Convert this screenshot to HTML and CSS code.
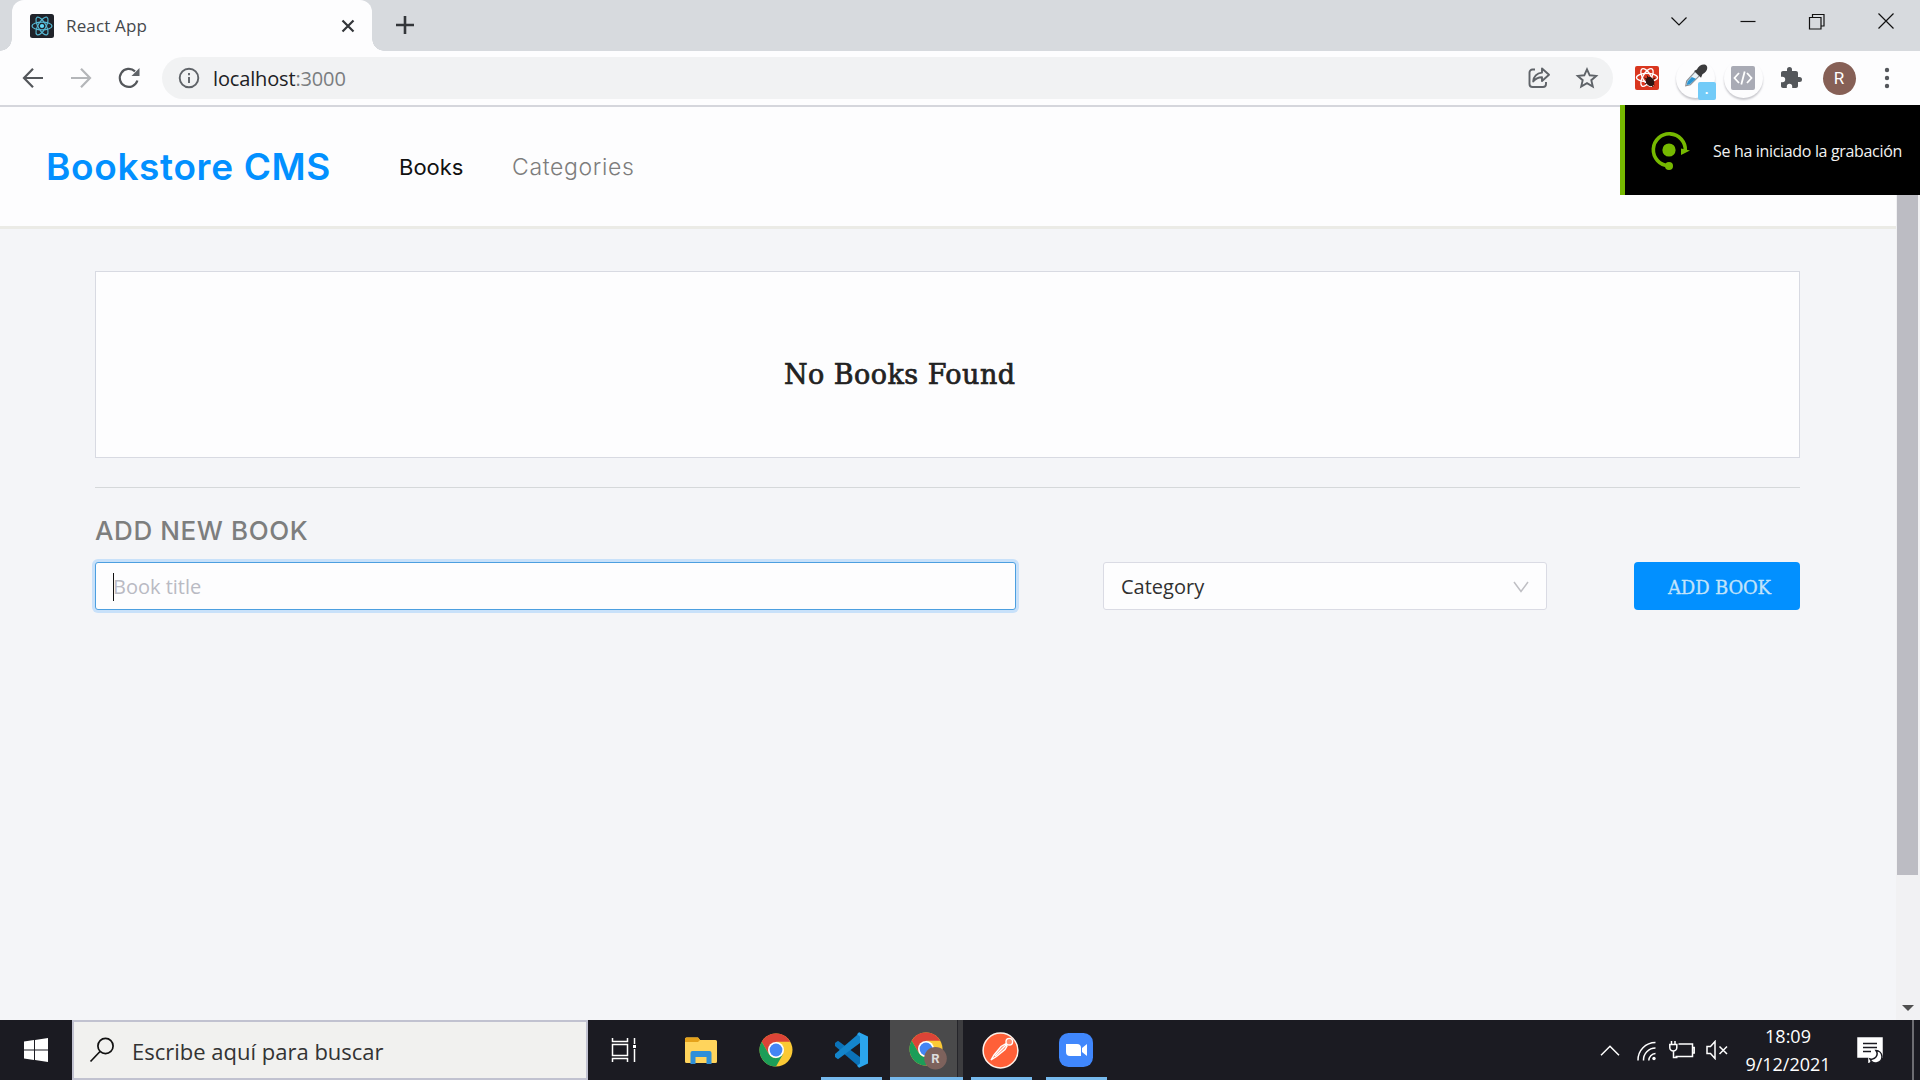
FILE: index.html
```html
<!DOCTYPE html>
<html lang="es">
<head>
<meta charset="utf-8">
<title>React App</title>
<link rel="stylesheet" href="styles.css">
</head>
<body>
<div class="screen">
  <div class="tabstrip">
    <div class="tab">
      <svg class="favicon" viewBox="0 0 24 24"><rect width="24" height="24" rx="2.5" fill="#20232a"/><g fill="none" stroke="#56b9d4" stroke-width="1.2"><ellipse cx="12" cy="12" rx="10" ry="3.9"/><ellipse cx="12" cy="12" rx="10" ry="3.9" transform="rotate(60 12 12)"/><ellipse cx="12" cy="12" rx="10" ry="3.9" transform="rotate(120 12 12)"/></g><circle cx="12" cy="12" r="2.1" fill="#61dafb"/></svg>
      <span class="tab-title">React App</span>
      <svg class="tab-close" viewBox="0 0 14 14"><path d="M1.5 1.5l11 11M12.5 1.5l-11 11" stroke="#33363a" stroke-width="2.2"/></svg>
    </div>
    <svg class="new-tab" viewBox="0 0 18 18"><path d="M9 0v18M0 9h18" stroke="#33363a" stroke-width="2.6"/></svg>
    <div class="window-controls">
      <svg viewBox="0 0 18 18"><path d="M1.5 5.5L9 13l7.500-7.500" /></svg>
      <svg viewBox="0 0 18 18"><path d="M1.500 9.500h15"/></svg>
      <svg viewBox="0 0 18 18"><path d="M1.500 5.500h11.500V17H1.500zM4.500 5.500V2.500h11.500V14h-3"/></svg>
      <svg viewBox="0 0 18 18"><path d="M1.500 1.500l15 15M16.500 1.500l-15 15"/></svg>
    </div>
  </div>

  <div class="toolbar">
    <svg class="tool" viewBox="0 0 24 24"><path d="M22 12H3.500M12 2.800L3 12l9 9.200"/></svg>
    <svg class="tool faded" viewBox="0 0 24 24"><path d="M2 12h18.500M12 2.800L21 12l-9 9.200"/></svg>
    <svg class="tool reload" viewBox="0 0 24 24"><path d="M20.400 14.500A9 9 0 1 1 18 5.400"/><path d="M22.500 2v8h-8z" fill="#5f6368" stroke="none"/></svg>
    <div class="omnibox">
      <svg class="info" viewBox="0 0 24 24"><circle cx="12" cy="12" r="9.300"/><path d="M12 11v6M12 7v2.200"/></svg>
      <span class="url">localhost<span class="port">:3000</span></span>
      <svg class="share" viewBox="0 0 24 24"><path d="M8 3.500H5.500a3 3 0 0 0-3 3V18a3 3 0 0 0 3 3H16a3 3 0 0 0 3-3v-2"/><path d="M15 2.500l7 6.300-7 6.200v-3.800c-4 0-6.500 1.200-8.800 4.200.5-5 3.300-8.200 8.800-8.800z" stroke-linejoin="round"/></svg>
      <svg class="star" viewBox="0 0 24 24"><path d="M12 3.300l2.700 6 6.500.6-4.900 4.300 1.500 6.400-5.800-3.400-5.800 3.400 1.500-6.400-4.900-4.300 6.500-.6z"/></svg>
    </div>
    <div class="extensions">
      <svg class="ext" viewBox="0 0 24 24"><rect width="24" height="24" rx="2" fill="#d9361f"/><g fill="none" stroke="#fff" stroke-width="1.300"><ellipse cx="12" cy="11.500" rx="10.500" ry="4.200"/><ellipse cx="12" cy="11.500" rx="10" ry="4.200" transform="rotate(60 12 11.500)"/><ellipse cx="12" cy="11.500" rx="10" ry="4.200" transform="rotate(120 12 11.500)"/></g><ellipse cx="15" cy="15.500" rx="4" ry="5" transform="rotate(-35 15 15.500)" fill="#2b1512"/><path d="M9.500 12l10 7M10 18l10-6M12 9.500l6 11.500" stroke="#2b1512"/></svg>
      <span class="halo"><svg class="pipette" viewBox="0 0 28 28"><path d="M4 24.500l1-5L14.500 9l4.500 4.500L9 23.500z" fill="#e8f1f6" stroke="#8b8f94" stroke-width="1.200"/><path d="M5 23.800l1-4L10.500 15l4.500 2-6.500 6z" fill="#2d95d2"/><path d="M13 8.500l3-1.500c2-5 8.500-7 10.500-4s-.5 7.500-4.500 9l-1.500 4z" fill="#3b3b3d"/></svg><span class="badge"><span class="badge-dot">.</span></span></span>
      <span class="halo"><svg class="code" viewBox="0 0 24 24"><rect width="24" height="24" rx="2" fill="#a9abb5"/><path d="M8 7l-4.500 5L8 17M16 7l4.500 5-4.500 5M13.700 5.500l-3.400 13" fill="none" stroke="#fff" stroke-width="1.800"/></svg></span>
      <svg class="ext" viewBox="0 0 24 24"><path d="M20.500 11H19V7c0-1.100-.9-2-2-2h-4V3.500a2.500 2.500 0 0 0-5 0V5H4c-1.100 0-2 .9-2 2v3.800h1.500a2.700 2.700 0 0 1 0 5.400H2V20c0 1.100.9 2 2 2h3.800v-1.500a2.700 2.700 0 0 1 5.400 0V22H17c1.100 0 2-.9 2-2v-4h1.500a2.500 2.500 0 0 0 0-5z" fill="#54575b"/></svg>
      <span class="avatar">R</span>
      <svg class="ext" viewBox="0 0 24 24" fill="#54575b"><circle cx="12" cy="4" r="2.200"/><circle cx="12" cy="12" r="2.200"/><circle cx="12" cy="20" r="2.200"/></svg>
    </div>
  </div>

  <div class="viewport">
    <div class="page">
      <header class="header">
        <h1 class="brand">Bookstore CMS</h1>
        <nav class="nav"><a class="nav-books">Books</a><a class="nav-categories">Categories</a></nav>
      </header>
      <main class="content">
        <section class="empty"><h2 class="empty-text">No Books Found</h2></section>
        <hr class="divider">
        <h3 class="form-title">ADD NEW BOOK</h3>
        <form class="form">
          <div class="field title-field"><span class="caret"></span><span class="placeholder">Book title</span></div>
          <div class="field category"><span class="category-text">Category</span><svg class="chevron" viewBox="0 0 16 12"><path d="M1 1l7 9.500L15 1" fill="none" stroke="#bfbfc4" stroke-width="1.500"/></svg></div>
          <div class="add"><span>ADD BOOK</span></div>
        </form>
      </main>
    </div>
    <div class="scrollbar"><div class="thumb"></div><svg class="down" viewBox="0 0 12 6"><path d="M0 0h12L6 6z" fill="#505050"/></svg></div>
  </div>

  <div class="taskbar">
    <div class="start"><svg viewBox="0 0 24 24"><path d="M0 3.500l10-1.400v9.400H0zM11 1.900L24 0v11.500H11zM0 12.500h10v9.400l-10-1.400zM11 12.500h13V24l-13-1.900z" fill="#fff"/></svg></div>
    <div class="search">
      <svg viewBox="0 0 26 26"><circle cx="16.500" cy="9" r="7.600" fill="none" stroke="#111" stroke-width="1.700"/><path d="M11 14.500L1.500 24.500" stroke="#111" stroke-width="1.700"/></svg>
      <span class="search-text">Escribe aquí para buscar</span>
    </div>
    <div class="apps">
      <div class="app taskview"><svg width="26" height="24" viewBox="0 0 26 24" fill="none" stroke="#fff" stroke-width="1.500"><path d="M1.500 0v3.500h15V0M1.500 24v-3.500h15V24M1.500 6.500h15v11h-15zM23.500 0v6M23.500 11v13"/><path d="M22 7h3v3h-3z" fill="#fff" stroke="none"/></svg></div>
      <div class="app explorer"><svg width="32" height="27" viewBox="0 0 32 27"><path d="M0 2a1.500 1.500 0 0 1 1.500-1.500H13L15 3h15.500A1.500 1.500 0 0 1 32 4.500v20a1.500 1.500 0 0 1-1.500 1.500h-29A1.500 1.500 0 0 1 0 24.500z" fill="#ffd45c"/><path d="M0 5V2A1.500 1.500 0 0 1 1.500.5H13L15 3l-2 2z" fill="#e5a21b"/><path d="M5.500 27V16a2 2 0 0 1 2-2h17a2 2 0 0 1 2 2v11h-5v-7h-11v7z" fill="#2e8fd8"/></svg></div>
      <div class="app chrome"><svg width="34" height="34" viewBox="0 0 34 34"><circle cx="17" cy="17" r="16.500" fill="#fbc935"/><path d="M2.710 8.750A16.500 16.500 0 0 1 31.290 8.750L17 8.750L9.850 21.100z" fill="#dc4437"/><path d="M2.710 8.750L9.850 21.100A8.250 8.250 0 0 0 17 25.200L24.100 21.100 17 33.500A16.500 16.500 0 0 1 2.710 8.750z" fill="#1c9d58"/><circle cx="17" cy="17" r="8" fill="#fff"/><circle cx="17" cy="17" r="6.400" fill="#4485f4"/></svg></div>
      <div class="app open vscode"><svg width="36" height="36" viewBox="0 0 36 36"><path d="M2 11l3-2.300L27 25v10.500L2 14z" fill="#0b72b8"/><path d="M2 25l3 2.300L27 11V.5L2 22z" fill="#1485cb"/><path d="M26 .2l9 4.300v27L26 35.800l-2-2 3-2.300V4.500L24 2.200z" fill="#2ba5ec"/></svg></div>
      <div class="app open active"><svg width="40" height="38" viewBox="0 0 40 38"><circle cx="17" cy="17" r="16.500" fill="#fbc935"/><path d="M2.710 8.750A16.500 16.500 0 0 1 31.290 8.750L17 8.750L9.850 21.100z" fill="#dc4437"/><path d="M2.710 8.750L9.850 21.100A8.250 8.250 0 0 0 17 25.200L24.100 21.100 17 33.500A16.500 16.500 0 0 1 2.710 8.750z" fill="#1c9d58"/><circle cx="17" cy="17" r="8" fill="#fff"/><circle cx="17" cy="17" r="6.400" fill="#4485f4"/><circle cx="26.500" cy="26.200" r="11.300" fill="#7d625c"/><text x="26.500" y="31" text-anchor="middle" class="mini-r">R</text></svg></div>
      <div class="app open postman"><svg width="37" height="37" viewBox="0 0 37 37"><circle cx="18.500" cy="18.500" r="17.400" fill="#ff6038" stroke="#fff1e8" stroke-width="1.500"/><path d="M9 28l3-5 7-8.500 4.500-2.500 1.500 2-2 3.500-8.500 7z" fill="#ff8c6d" stroke="#fff" stroke-width="1.400"/><path d="M13 24L24 13" stroke="#fff" stroke-width="1.200"/><circle cx="27.300" cy="9.700" r="3.300" fill="#ff8c6d" stroke="#fff" stroke-width="1.400"/></svg></div>
      <div class="app open zoom"><svg width="34" height="34" viewBox="0 0 34 34"><rect width="34" height="34" rx="9.500" fill="#4087fc"/><path d="M7 11h11a4 4 0 0 1 4 4v8H11a4 4 0 0 1-4-4zM23 15l5-4v12l-5-4z" fill="#fff"/></svg></div>
    </div>
    <div class="tray">
      <svg class="up" viewBox="0 0 20 11"><path d="M1 10.200L10 1.200l9 9"/></svg>
      <svg class="wifi" viewBox="0 0 20 20"><path d="M1 19.500A17.500 17.500 0 0 1 18.500 1.500M6.500 19.500A12 12 0 0 1 18.500 7M11.800 19.500a7 7 0 0 1 6.700-7"/><circle cx="17" cy="17.500" r="1.700" fill="#fff" stroke="none"/></svg>
      <svg class="battery" viewBox="0 0 26 18"><path d="M9.500 3h14v12.500H6.500M23.500 6.500h1.700v5.500h-1.700M2.500 0v3M6 0v3M.8 3.500h7v3a3.500 3.500 0 0 1-7 0zM4.500 10v6.500h4"/></svg>
      <svg class="sound" viewBox="0 0 22 20"><path d="M1 6.500h3.500L9 1.500v17L4.500 13.500H1zM13.500 6.500l7.500 7.500M21 6.500L13.500 14"/></svg>
      <div class="clock"><span class="time">18:09</span><span class="date">9/12/2021</span></div>
      <svg class="action" viewBox="0 0 26 26"><path d="M1 1h24v19h-9l-4 5v-5H1z" fill="#fff"/><path d="M6 6.500h14M6 10.500h14M6 14.500h8" stroke="#1b1b22" stroke-width="1.400"/><path d="M19 13.500a5.500 5.500 0 0 1-6 8.500 6.200 6.200 0 1 0 6-8.500z" fill="#fff" stroke="#1b1b22"/></svg>
      <span class="show-desktop"></span>
    </div>
  </div>

  <div class="toast">
    <svg viewBox="0 0 40 40"><path d="M18.500 34.800a16 16 0 1 1 16.800-15" fill="none" stroke="#76b900" stroke-width="3.600"/><path d="M31 17.500L40 19.500 31 24z" fill="#76b900"/><circle cx="19" cy="19" r="6.600" fill="#76b900"/><circle cx="19" cy="35" r="4" fill="#76b900"/></svg>
    <span>Se ha iniciado la grabación</span>
  </div>
</div>
</body>
</html>
```
FILE: styles.css
```css
* { box-sizing: border-box; }
body { margin: 0; font-family: "Open Sans", "Noto Sans", sans-serif; }
svg { display: block; flex: none; }
h1, h2, h3 { margin: 0; }
span, a, h1, h2, h3 { white-space: nowrap; }

.screen { position: relative; width: 1920px; height: 1080px; overflow: hidden; display: flex; flex-direction: column; }

/* Browser tabs */
.tabstrip { height: 51px; background: #d7dade; display: flex; flex: none; }
.tab { position: relative; width: 360px; height: 51px; margin-left: 12px; padding: 0 17px 0 18px; background: #fdfdfe; border-radius: 12px 12px 0 0; display: flex; align-items: center; }
.tab::before, .tab::after { content: ""; position: absolute; bottom: 0; width: 12px; height: 12px; }
.tab::before { left: -12px; background: radial-gradient(circle at 0 0, transparent 11.5px, #fdfdfe 12px); }
.tab::after { right: -12px; background: radial-gradient(circle at 100% 0, transparent 11.5px, #fdfdfe 12px); }
.favicon { width: 24px; height: 24px; }
.tab-title { margin-left: 12px; font-size: 17px; letter-spacing: 0.15px; color: #45484c; }
.tab-close { width: 14px; height: 14px; margin-left: auto; }
.new-tab { width: 18px; height: 18px; margin: 16px 0 0 24px; }
.window-controls { margin: 12px 25px 0 auto; display: flex; gap: 51px; }
.window-controls svg { width: 18px; height: 18px; fill: none; stroke: #111; stroke-width: 1.2; }

/* Address row */
.toolbar { height: 56px; padding: 0 9px 0 21px; background: #fdfdfe; border-bottom: 2px solid #d5d6dc; display: flex; align-items: center; flex: none; }
.tool { width: 24px; height: 24px; margin-right: 24px; fill: none; stroke: #54575b; stroke-width: 2.2; }
.faded { stroke: #b4b6b9; }
.reload { margin-right: 21px; }
.omnibox { width: 1451px; height: 42px; padding: 0 14px 0 15px; border-radius: 21px; background: #f1f2f3; display: flex; align-items: center; }
.omnibox svg { width: 24px; height: 24px; fill: none; stroke: #5f6368; stroke-width: 1.9; }
.url { margin-left: 12px; font-size: 20px; letter-spacing: -0.15px; color: #202124; }
.port { color: #7a7d80; }
.omnibox .share { margin-left: auto; margin-right: 24px; }
.extensions { margin-left: 10px; display: grid; grid-template-columns: repeat(6, 48px); place-items: center; }
.ext { width: 24px; height: 24px; }
.halo { position: relative; width: 39px; height: 39px; border-radius: 50%; box-shadow: 0 2px 2px #c9c9ce; display: flex; align-items: center; justify-content: center; }
.pipette { width: 26px; height: 26px; margin-top: -4px; }
.code { width: 24px; height: 24px; }
.badge { position: absolute; right: -1px; bottom: -2px; width: 18px; height: 18px; border-radius: 2px; background: #72cbf8; color: #fff; display: flex; justify-content: center; }
.badge-dot { font: bold 13px/14px "Open Sans", sans-serif; }
.avatar { width: 33px; height: 33px; border-radius: 50%; background: #866056; color: #fff; font: 17px/33px Roboto, sans-serif; text-align: center; }

/* Page */
.viewport { height: 913px; display: flex; flex: none; background: #f4f5f8; }
.page { width: 1896px; }
.header { height: 122px; padding: 0 46px; background: #fdfdfe; border-bottom: 3px solid #ebebe6; display: flex; align-items: center; }
.brand { width: 353px; font: 600 37px/48px Inter, sans-serif; letter-spacing: 0.65px; color: #0290ff; }
.nav { display: flex; font: 22px/30px Inter, sans-serif; }
.nav-books { width: 113px; color: #111; }
.nav-categories { font-size: 23px; font-weight: 300; letter-spacing: 0.65px; color: #7d7d7d; }
.content { margin: 42px 96px 0 95px; }
.empty { height: 187px; border: 1px solid #d8dae2; background: #fdfdfe; padding: 83px 0 0 688px; }
.empty-text { font: 27px/40px "DejaVu Serif", serif; letter-spacing: 0.45px; color: #222; -webkit-text-stroke: 0.7px #222; }
.divider { height: 1px; margin: 29px 0 0; border: 0; background: #d5d8da; }
.form-title { margin-top: 25px; font: 500 26px/36px Inter, sans-serif; letter-spacing: 0.6px; color: #7d7e7e; }
.form { margin-top: 13px; display: flex; height: 48px; }
.field { border: 1px solid #dadbe4; border-radius: 3px; background: #fdfdfe; display: flex; align-items: center; font-size: 20px; padding-top: 1px; }
.title-field { width: 921px; padding-left: 17px; border-color: #4c9fe0; box-shadow: 0 0 0 3px #c8e1fa; }
.caret { width: 1px; height: 28px; background: #111; }
.placeholder { margin-left: -1px; color: #b9bac3; }
.category { width: 444px; margin: 0 87px; padding: 1px 17px 0; justify-content: space-between; color: #303030; }
.chevron { width: 16px; height: 12px; }
.add { width: 166px; border-radius: 4px; background: #0290ff; color: #c2e3fa; font: 18px/51px "DejaVu Serif", serif; letter-spacing: -0.15px; -webkit-text-stroke: 0.3px #c2e3fa; padding-left: 34px; }

.scrollbar { width: 24px; background: #f1f1f3; display: flex; flex-direction: column; align-items: center; padding-right: 1px; }
.thumb { width: 21px; height: 742px; margin-top: 26px; background: #bcbcc3; }
.down { width: 12px; height: 6px; margin: auto 0 9px; }

/* Taskbar */
.taskbar { height: 60px; background: #1b1b22; display: flex; flex: none; }
.start { width: 72px; padding: 18px 0 0 24px; }
.start svg { width: 24px; height: 24px; }
.search { width: 516px; border: 2px solid #c1c2d0; background: #f1f1ef; padding-left: 15px; display: flex; align-items: center; font-size: 22px; color: #333; }
.search svg { width: 26px; height: 26px; margin: -1px 17px 0 0; }
.search-text { padding-top: 2px; }
.apps { display: grid; grid-template-columns: repeat(7, 75px); }
.app { position: relative; display: flex; align-items: center; justify-content: center; }
.taskview { padding-right: 4px; }
.open::after { content: ""; position: absolute; bottom: 0; left: 8px; width: 61px; height: 3px; background: #76b9ed; }
.active { background: linear-gradient(90deg, #4a4a4b 67px, #25252a 67px, #25252a 68px, #3c3c3f 68px); margin: 0 0 0 2px; padding: 2px 0 0 4px; }
.active::after { left: 0; width: 73px; }
.mini-r { font: bold 13px Roboto, sans-serif; fill: #ddd; }
.tray { margin-left: auto; display: flex; align-items: center; }
.tray svg { fill: none; stroke: #fff; stroke-width: 1.5; }
.up { width: 20px; height: 11px; margin-right: 17px; }
.tray .wifi { width: 20px; height: 20px; margin: 2px 12px 0 0; }
.battery { width: 26px; height: 18px; margin-right: 11px; }
.sound { width: 22px; height: 20px; margin-right: 18px; }
.clock { width: 84px; display: flex; flex-direction: column; align-items: center; font-size: 18px; line-height: 28px; color: #fff; }
.action { width: 26px; height: 26px; margin-left: 27px; }
.show-desktop { width: 2px; height: 60px; margin: 0 6px 0 29px; background: #6d6d72; }

/* Recording notice over the window */
.toast { position: absolute; left: 1620px; top: 105px; width: 300px; height: 90px; border-left: 5px solid #76b900; background: #000; padding: 2px 0 0 25px; display: flex; align-items: center; font-size: 16px; letter-spacing: -0.33px; color: #f2f2f2; }
.toast svg { width: 40px; height: 40px; margin-right: 23px; }
```
